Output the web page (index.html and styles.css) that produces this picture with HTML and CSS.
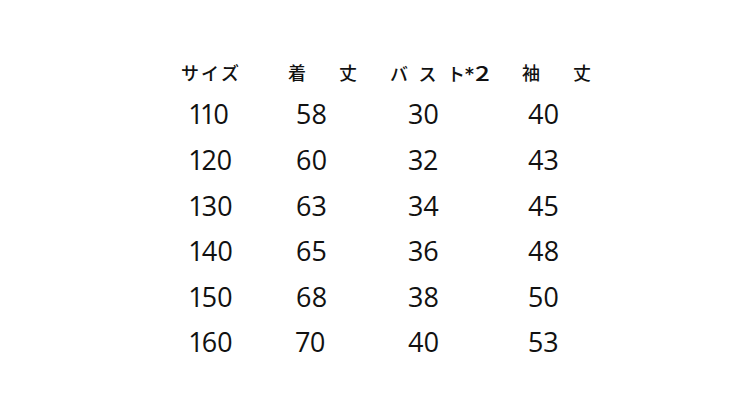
FILE: index.html
```html
<!DOCTYPE html>
<html lang="ja">
<head>
<meta charset="utf-8">
<link rel="stylesheet" href="styles.css">
</head>
<body>
<div class="sheet">
  <div class="table">
    <div class="head c1"><span class="ls2">サイ</span>ズ</div>
    <div class="head c2"><span class="wide">着</span>丈</div>
    <div class="head c3"><span class="kana">バ</span><span class="kana">ス</span>ト<span class="mark">*</span><span class="two">2</span></div>
    <div class="head c4"><span class="wide">袖</span>丈</div>

    <div class="num c1">110</div><div class="num c2">58</div><div class="num c3">30</div><div class="num c4">40</div>
    <div class="num c1">120</div><div class="num c2">60</div><div class="num c3">32</div><div class="num c4">43</div>
    <div class="num c1">130</div><div class="num c2">63</div><div class="num c3">34</div><div class="num c4">45</div>
    <div class="num c1">140</div><div class="num c2">65</div><div class="num c3">36</div><div class="num c4">48</div>
    <div class="num c1">150</div><div class="num c2">68</div><div class="num c3">38</div><div class="num c4">50</div>
    <div class="num c1">160</div><div class="num c2">70</div><div class="num c3">40</div><div class="num c4">53</div>
  </div>
</div>
</body>
</html>
```
FILE: styles.css
```css
html, body {
  margin: 0;
  padding: 0;
  background: #ffffff;
}
.sheet {
  width: 750px;
  height: 410px;
  box-sizing: border-box;
  padding: 62px 0 0 181px;
  color: #111111;
}
.table {
  display: grid;
  grid-template-columns: 107px 102px 132px 80px;
  grid-auto-rows: 45.6px;
  grid-template-rows: 29.4px;
}
.head {
  font-family: "Noto Sans CJK JP", sans-serif;
  font-size: 18px;
  font-weight: 500;
  line-height: 21px;
  white-space: nowrap;
}
.ls2 { letter-spacing: 2px; }
.wide { display: inline-block; width: 51px; }
.kana { display: inline-block; width: 28.5px; }
.mark { display: inline-block; font-family: "DejaVu Sans", sans-serif; font-weight: 700; font-size: 17px; vertical-align: 1px; margin-left: 0; margin-right: 1px; }
.two { display: inline-block; font-family: "Noto Sans CJK JP", sans-serif; font-weight: 500; font-size: 20px; transform: scaleX(1.3); transform-origin: left center; }
.num {
  font-family: "Open Sans", sans-serif;
  font-size: 27px;
  line-height: 45.6px;
  color: #111111;
  font-variant-numeric: proportional-nums;
}
.num.c1 { padding-left: 9px; }
.num.c2 { padding-left: 8px; }
.num.c3 { padding-left: 18px; }
.num.c4 { padding-left: 6px; }
```
